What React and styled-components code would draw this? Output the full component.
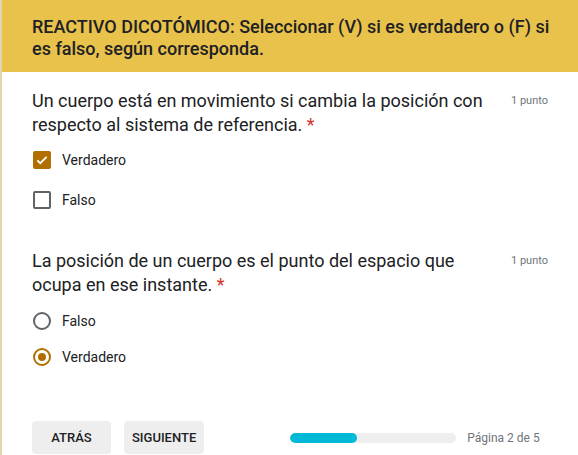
import styled, { createGlobalStyle } from 'styled-components';

const Global = createGlobalStyle`
	html, body {
		margin: 0;
		padding: 0;
		background: #ffffff;
		font-family: Roboto, "Liberation Sans", Arial, sans-serif;
		color: #202124;
	}
`;

const Page = styled.div`
	width: 578px;
	height: 455px;
	overflow: hidden;
	box-sizing: border-box;
	border-left: 2px solid #e3d6ae;
	background: #ffffff;
`;

const Banner = styled.div`
	background: #e9c24b;
	padding: 16px 20px 12px 30px;
	height: 72px;
	box-sizing: border-box;
	font-size: 18px;
	font-weight: 500;
	line-height: 22px;
	color: #202124;
`;

const Question = styled.div`
	padding: 0 30px;
	margin-top: ${(p) => p.$top}px;
`;

const Head = styled.div`
	display: flex;
	justify-content: space-between;
	align-items: flex-start;
	> p {
		margin: 0;
		font-size: 18px;
		line-height: 24px;
		width: 460px;
	}
	> span {
		font-size: 11px;
		color: #70757a;
		line-height: 24px;
	}
`;

const Req = styled.span`
	color: #d93025;
`;

const Option = styled.label`
	display: flex;
	align-items: center;
	gap: 11px;
	height: ${(p) => p.$h}px;
	font-size: 14px;
	color: #202124;
	padding-left: 1px;
`;

const Box = styled.span`
	width: 18px;
	height: 18px;
	box-sizing: border-box;
	border-radius: 2px;
	border: 2px solid ${(p) => (p.$on ? '#b06f00' : '#5f6368')};
	background: ${(p) => (p.$on ? '#b06f00' : 'transparent')};
	display: flex;
	align-items: center;
	justify-content: center;
`;

const Radio = styled.span`
	width: 18px;
	height: 18px;
	box-sizing: border-box;
	border-radius: 50%;
	border: 2px solid ${(p) => (p.$on ? '#b06f00' : '#5f6368')};
	display: flex;
	align-items: center;
	justify-content: center;
	&::after {
		content: '';
		width: 8px;
		height: 8px;
		border-radius: 50%;
		background: ${(p) => (p.$on ? '#b06f00' : 'transparent')};
	}
`;

const Footer = styled.div`
	display: flex;
	align-items: center;
	padding: 0 30px;
	margin-top: 52px;
`;

const Button = styled.button`
	height: 33px;
	min-width: 79px;
	padding: 0 8px;
	margin-right: 13px;
	border: none;
	border-radius: 4px;
	background: #eeeeee;
	font-family: Roboto, "Liberation Sans", Arial, sans-serif;
	font-size: 13px;
	font-weight: 500;
	color: #202124;
`;

const Progress = styled.div`
	display: flex;
	align-items: center;
	margin-left: 73px;
	gap: 11px;
	> span {
		font-size: 12px;
		color: #70757a;
		white-space: nowrap;
	}
`;

const Track = styled.div`
	width: 166px;
	height: 10px;
	border-radius: 5px;
	background: #eeeeee;
	overflow: hidden;
`;

const Fill = styled.div`
	height: 100%;
	border-radius: 5px;
	background: #00b9d6;
`;

const Check = () => (
	<svg width="14" height="14" viewBox="0 0 24 24">
		<path d="M4 12.5l5 5L20 6.5" fill="none" stroke="#fff" strokeWidth="3" />
	</svg>
);

const App = () => {
	return (
		<Page>
			<Global />
			<Banner>
				REACTIVO DICOTÓMICO: Seleccionar (V) si es verdadero o (F) si es falso, según corresponda.
			</Banner>
			<Question $top={17}>
				<Head>
					<p>
						Un cuerpo está en movimiento si cambia la posición con respecto al sistema de referencia. <Req>*</Req>
					</p>
					<span>1 punto</span>
				</Head>
				<Option $h={46}>
					<Box $on>
						<Check />
					</Box>
					Verdadero
				</Option>
				<Option $h={34}>
					<Box />
					Falso
				</Option>
			</Question>
			<Question $top={32}>
				<Head>
					<p>
						La posición de un cuerpo es el punto del espacio que ocupa en ese instante. <Req>*</Req>
					</p>
					<span>1 punto</span>
				</Head>
				<Option $h={48}>
					<Radio />
					Falso
				</Option>
				<Option $h={24}>
					<Radio $on />
					Verdadero
				</Option>
			</Question>
			<Footer>
				<Button>ATRÁS</Button>
				<Button>SIGUIENTE</Button>
				<Progress>
					<Track>
						<Fill style={{ width: `${(2 / 5) * 100}%` }} />
					</Track>
					<span>Página 2 de 5</span>
				</Progress>
			</Footer>
		</Page>
	);
};

export default App;
